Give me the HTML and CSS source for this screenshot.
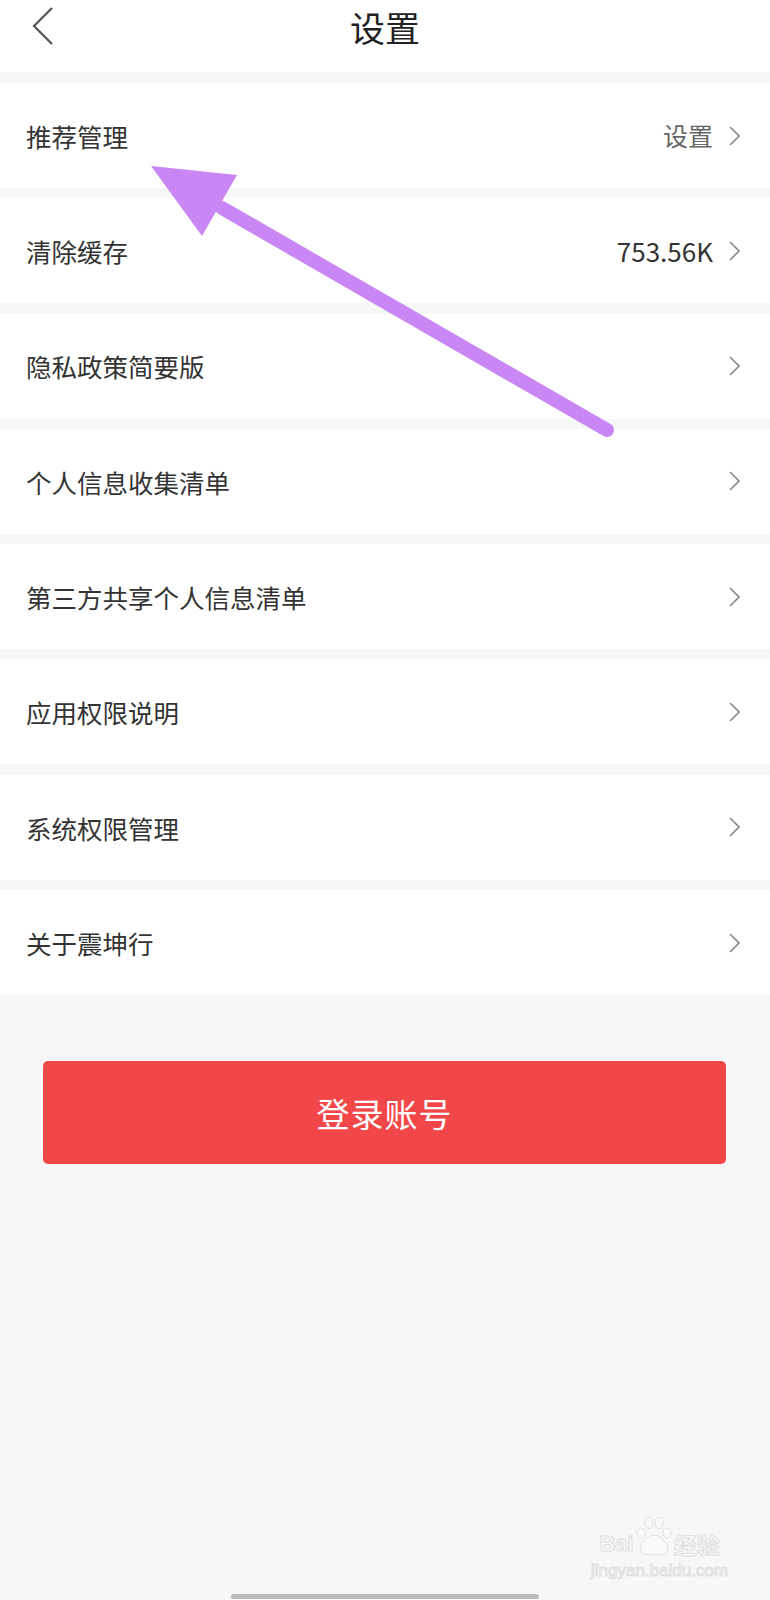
FILE: index.html
```html
<!DOCTYPE html>
<html lang="zh-CN">
<head>
	<meta charset="UTF-8">
	<title>设置</title>
	<link rel="stylesheet" href="styles.css">
</head>
<body>
	<div class="page">
		<div class="topbar">
			<a href="javascript:;" class="back">
				<svg width="22" height="38" viewBox="0 0 22 38"><polyline points="20,1 2,19 20,37" fill="none" stroke="#555" stroke-width="2.2"/></svg>
			</a>
			<h1 class="title">设置</h1>
			<span></span>
		</div>

		<ul class="menu">
			<li class="row">
				<span class="label">推荐管理</span>
				<span class="value muted">设置<i class="arrow"></i></span>
			</li>
			<li class="row">
				<span class="label">清除缓存</span>
				<span class="value">753.56K<i class="arrow"></i></span>
			</li>
			<li class="row">
				<span class="label">隐私政策简要版</span>
				<span class="value"><i class="arrow"></i></span>
			</li>
			<li class="row">
				<span class="label">个人信息收集清单</span>
				<span class="value"><i class="arrow"></i></span>
			</li>
			<li class="row">
				<span class="label">第三方共享个人信息清单</span>
				<span class="value"><i class="arrow"></i></span>
			</li>
			<li class="row">
				<span class="label">应用权限说明</span>
				<span class="value"><i class="arrow"></i></span>
			</li>
			<li class="row">
				<span class="label">系统权限管理</span>
				<span class="value"><i class="arrow"></i></span>
			</li>
			<li class="row">
				<span class="label">关于震坤行</span>
				<span class="value"><i class="arrow"></i></span>
			</li>
		</ul>

		<a href="javascript:;" class="login">登录账号</a>

		<!-- annotation arrow drawn over the list -->
		<svg class="pointer" width="770" height="460" viewBox="0 0 770 460">
			<line x1="607" y1="430" x2="222" y2="208" stroke="#c987f5" stroke-width="14" stroke-linecap="round"/>
			<polygon points="151,166 237,175 202,236" fill="#c987f5"/>
		</svg>

		<div class="watermark">
			<div class="wm-logo">
				<span class="wm-bai">Bai</span>
				<svg width="40" height="40" viewBox="0 0 40 40">
					<g fill="#fafafa" stroke="#e0e0e0" stroke-width="1">
						<ellipse cx="7" cy="17" rx="4" ry="5"/>
						<ellipse cx="15" cy="7" rx="4" ry="5.5"/>
						<ellipse cx="25" cy="7" rx="4" ry="5.5"/>
						<ellipse cx="33" cy="17" rx="4" ry="5"/>
						<path d="M20 19 C13 19 6 28 6 33 C6 38 12 39 20 38 C28 39 34 38 34 33 C34 28 27 19 20 19 Z"/>
					</g>
					<text x="20" y="35" text-anchor="middle" class="wm-du">du</text>
				</svg>
				<span class="wm-cn">经验</span>
			</div>
			<span class="wm-url">jingyan.baidu.com</span>
		</div>

		<span class="home-bar"></span>
	</div>
</body>
</html>
```

FILE: styles.css
```css
* { padding: 0; margin: 0; box-sizing: border-box; }
li { list-style: none; }
a { text-decoration: none; }
body { background: #f7f7f7; font-family: "Noto Sans CJK SC", "Noto Sans", sans-serif; }

.page { width: 770px; height: 1600px; position: relative; overflow: hidden; background: #f7f7f7; }

.topbar { height: 72px; background: #fff; display: grid; grid-template-columns: 1fr auto 1fr; align-items: center; padding-bottom: 20px; }
.topbar .back { display: flex; padding-left: 32px; }
.title { font-size: 35px; font-weight: 400; color: #222; line-height: 1; }

.menu { margin-top: 11px; display: flex; flex-direction: column; gap: 10.3px; }
.row { height: 105px; background: #fff; display: flex; align-items: center; justify-content: space-between; padding: 0 30px 0 26px; }
.label { font-size: 25.5px; color: #333; line-height: 1; }
.value { display: flex; align-items: center; gap: 16px; font-size: 26px; color: #333; line-height: 1; }
.value.muted { color: #666; font-size: 25px; }
.arrow { width: 11px; height: 20px; display: block;
	background: no-repeat center/11px 20px url("data:image/svg+xml,%3Csvg xmlns='http://www.w3.org/2000/svg' width='11' height='20' viewBox='0 0 11 20'%3E%3Cpolyline points='1,1 10,10 1,19' fill='none' stroke='%23888' stroke-width='1.6'/%3E%3C/svg%3E");
}

.login { display: flex; align-items: center; justify-content: center; height: 103px; margin: 66px 44px 0 43px; background: #f24748; border-radius: 5px; color: #fff; font-size: 33px; letter-spacing: 1px; }

.pointer { position: absolute; left: 0; top: 0; pointer-events: none; }

.watermark { position: absolute; left: 591px; top: 1516px; width: 137px; display: flex; flex-direction: column; align-items: center; color: #fafafa; -webkit-text-stroke: 1px #e0e0e0; line-height: 1; }
.wm-logo { display: flex; align-items: flex-end; }
.wm-bai { font-family: "Liberation Sans", sans-serif; font-weight: bold; font-size: 22px; margin-bottom: 1px; }
.wm-du { font-family: "Liberation Sans", sans-serif; font-weight: bold; font-size: 12px; fill: #fafafa; }
.wm-cn { font-size: 23px; font-weight: bold; }
.wm-url { font-size: 17px; margin-top: 6px; font-family: "Liberation Sans", sans-serif; }

.home-bar { position: absolute; left: 231px; bottom: 1px; width: 308px; height: 5px; border-radius: 3px; background: #bbb; }
```
